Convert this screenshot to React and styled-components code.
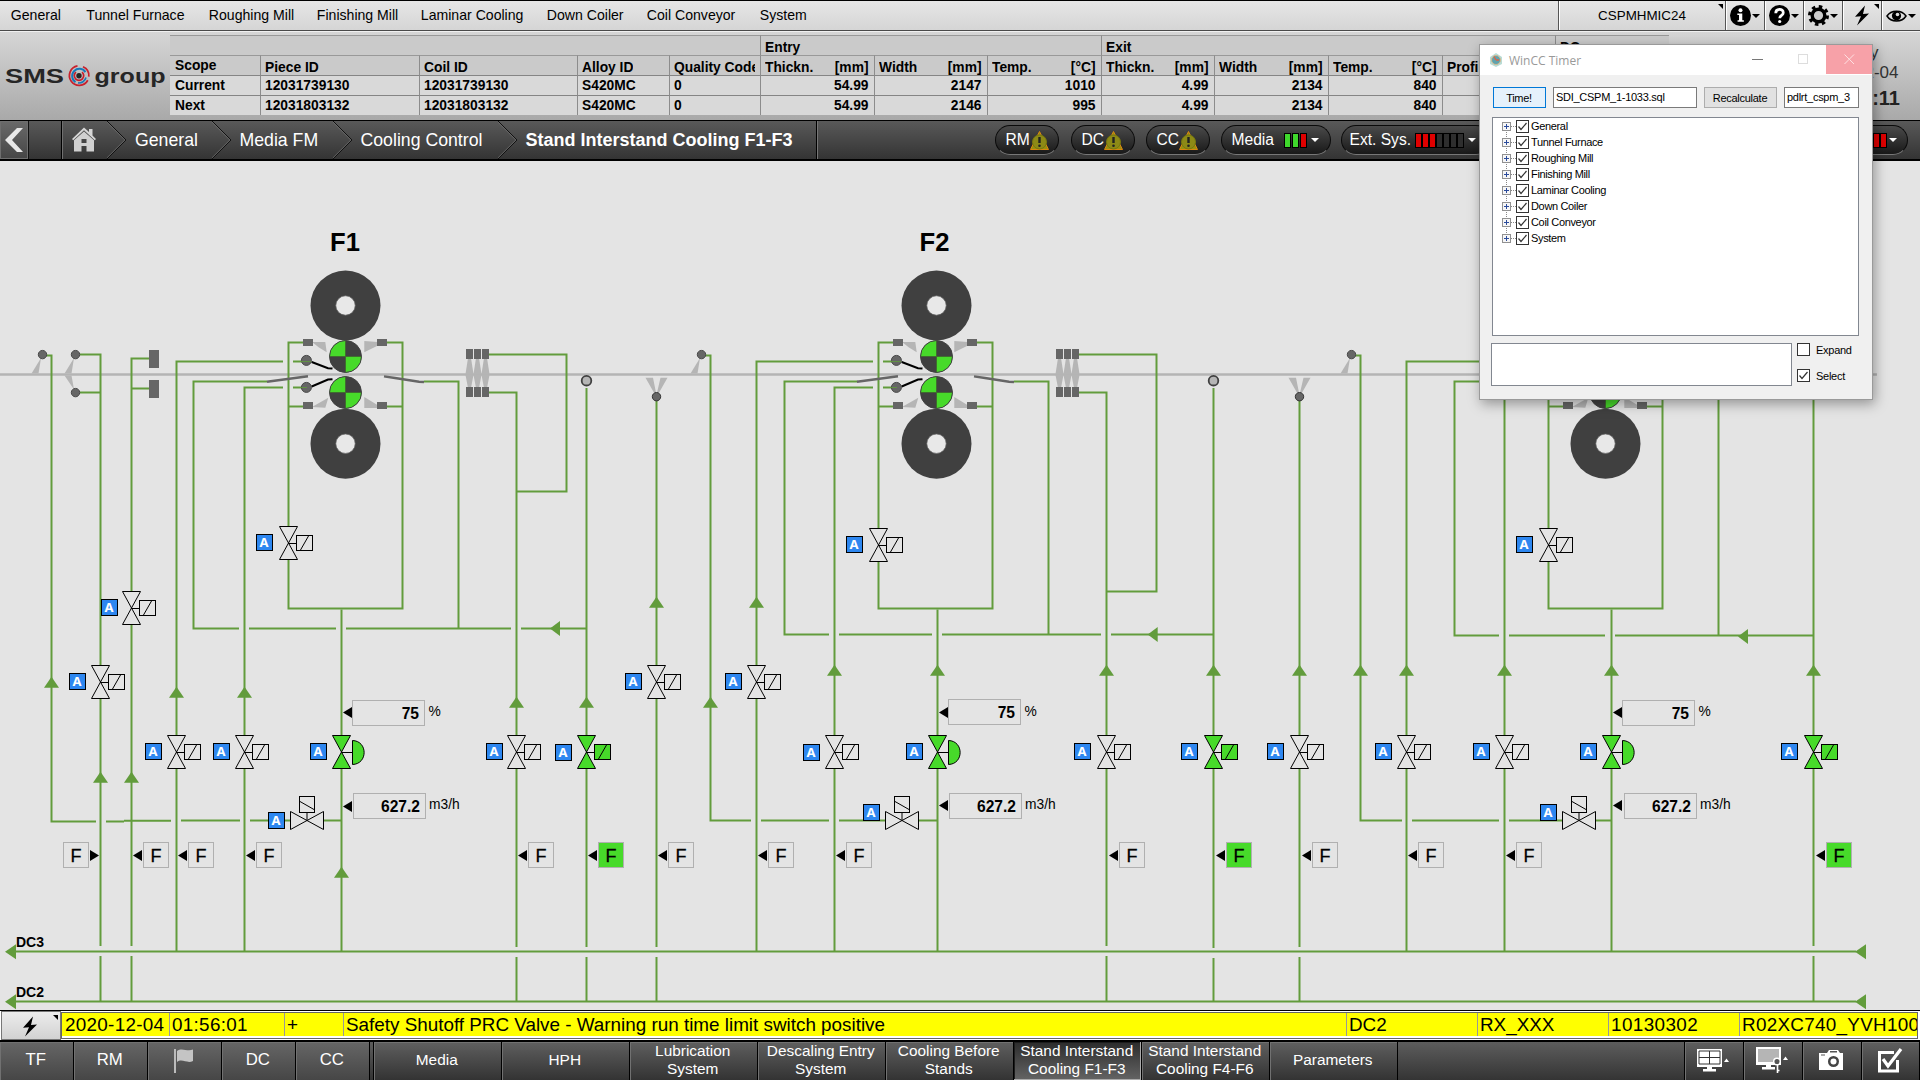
import React from "react";
import styled, { createGlobalStyle, css } from "styled-components";

const Global = createGlobalStyle`
  * { box-sizing: border-box; }
  html, body { margin: 0; padding: 0; background: #e4e4e4; overflow: hidden; }
  body { font-family: "Liberation Sans", Arial, sans-serif; color: #000; }
  svg { display: block; flex: none; }
`;

const Screen = styled.div`
  position: relative;
  width: 1920px;
  height: 1080px;
  display: flex;
  flex-direction: column;
  overflow: hidden;
  white-space: nowrap;
`;

/* ---------- menu bar ---------- */
const MenuBar = styled.header`
  height: 31px;
  display: flex;
  border-top: 1px solid #000;
  border-bottom: 1px solid #4a4a4a;
  background: linear-gradient(#e6e6e6, #d5d5d5);
  flex: none;
`;
const MenuItems = styled.nav`
  width: 1558px;
  display: flex;
  padding-left: 10.8px;
`;
const MenuItem = styled.span`
  width: ${(p) => p.$w}px;
  font-size: 14.1px;
  line-height: 28px;
`;
const MenuCell = styled.div`
  position: relative;
  width: ${(p) => p.$w}px;
  border-left: 1px solid #555;
  box-shadow: inset 1px 0 0 #fff;
  display: flex;
  align-items: center;
  justify-content: center;
  font-size: 13.4px;
`;
const Corner = styled.i`
  position: absolute;
  top: 3px;
  right: 2px;
  border-top: 5px solid #000;
  border-left: 5px solid transparent;
`;

/* ---------- piece information ---------- */
const InfoBar = styled.section`
  height: 89px;
  flex: none;
  display: flex;
  background: linear-gradient(#d6d6d6, #a9a9a9);
  border-top: 1px solid #f0f0f0;
`;
const LogoBox = styled.div`
  width: 170px;
  padding: 28px 0 0 0;
`;
const PieceTable = styled.div`
  width: 1499px;
  height: 80px;
  margin-top: 3px;
  display: grid;
  grid-template-columns: 90px 159px 158px 92px 91px 114px 113px 114px 113px 114px 114px 113px 114px;
  grid-template-rows: 20px 20px 20px 20px;
  border-bottom: 1px solid #808080;
`;
const Cell = styled.div`
  grid-column: span ${(p) => p.$span || 1};
  display: flex;
  justify-content: ${(p) => (p.$right ? "flex-end" : "space-between")};
  overflow: hidden;
  padding: ${(p) => (p.$first ? "0 5px" : p.$head ? "0 5.5px 0 4px" : "0 5.5px 0 4px")};
  border-top: 1px solid ${(p) => (p.$head ? "#999" : "#858585")};
  border-left: ${(p) => (p.$first ? "none" : "1px solid #8c8c8c")};
  background: ${(p) => (p.$head ? "#cacaca" : "#d9d9d9")};
  font-size: 13.8px;
  font-weight: bold;
  line-height: ${(p) => (p.$scope ? 20 : p.$head ? 23 : 19)}px;
  span { overflow: hidden; }
`;
const Clock = styled.div`
  flex: 1;
  display: flex;
  flex-direction: column;
  align-items: center;
  padding: 11px 0 0 121px;
  width: 251px;
  font-size: 17px;
  line-height: 20px;
  color: #333;
  div { width: 130px; text-align: center; }
  b { width: 90px; margin-top: 3px; text-align: right; font-size: 20px; line-height: 24px; color: #222; }
`;

/* ---------- breadcrumb ---------- */
const CrumbBar = styled.nav`
  height: 41px;
  flex: none;
  display: flex;
  color: #fff;
  background: linear-gradient(#595959, #343434);
  border-top: 1px solid #000;
  border-bottom: 2px solid #000;
`;
const BackButton = styled.div`
  width: 29px;
  border-right: 1px solid #111;
  box-shadow: inset 0 0 0 1px #6e6e6e;
  background: linear-gradient(#6a6a6a, #454545);
  padding: 6px 0 0 4px;
`;
const CrumbSpacer = styled.div`
  width: 33px;
  border-right: 1px solid #000;
`;
const Home = styled.div`
  width: 45px;
  padding: 6px 0 0 10px;
  box-shadow: inset 1px 0 0 #707070;
`;
const ChevronMark = styled.svg`
  width: 20px;
  height: 38px;
  margin-right: 8px;
`;
const Crumb = styled.span`
  width: ${(p) => p.$w}px;
  font-size: ${(p) => (p.$bold ? 18 : 17.7)}px;
  line-height: 39px;
  font-weight: ${(p) => (p.$bold ? "bold" : "normal")};
`;
const CrumbEnd = styled.div`
  width: 179px;
  border-left: 1px solid #000;
  box-shadow: inset 1px 0 0 #777;
`;
const Pill = styled.div`
  width: ${(p) => p.$w}px;
  height: 30px;
  margin: 4px ${(p) => p.$gap}px 0 0;
  padding-left: ${(p) => p.$pad || 10}px;
  display: flex;
  align-items: center;
  border: 1px solid #0a0a0a;
  border-bottom-color: #777;
  border-radius: 15px;
  background: linear-gradient(#4a4a4a, #191919);
  font-size: 15.6px;
`;
const Bars = styled.div`
  display: flex;
  gap: ${(p) => p.$gap || 0}px;
  margin-left: ${(p) => p.$ml || 0}px;
`;
const Bar = styled.i`
  width: 7px;
  height: 15px;
  background: ${(p) => p.$c};
  border: 1px solid #000;
`;
const Caret = styled.i`
  margin-left: ${(p) => p.$ml || 4}px;
  border: 4px solid transparent;
  border-top-color: ${(p) => p.$c || "#fff"};
  border-bottom: 0;
`;

/* ---------- process canvas ---------- */
const Canvas = styled.main`
  position: relative;
  height: 849px;
  flex: none;
  background: #e4e4e4;
  overflow: hidden;
`;
const Drawing = styled.svg`
  position: absolute;
  left: 0;
  top: 0;
`;
const Placed = styled.div`
  position: absolute;
  left: ${(p) => p.$x}px;
  top: ${(p) => p.$y - 161}px;
`;
const AutoBadge = styled(Placed)`
  width: 17px;
  height: 17px;
  border: 1px solid #000;
  background: #2e87f0;
  color: #fff;
  font: bold 13px/15px "Noto Sans", "Open Sans", sans-serif;
  text-align: center;
  text-indent: -1px;
`;
const FlagBox = styled(Placed)`
  width: 26px;
  height: 26px;
  border: 1px solid #b0b0b0;
  background: ${(p) => (p.$on ? "#47da2a" : "#e4e4e4")};
  font-size: 18px;
  -webkit-text-stroke: 0.3px #000;
  line-height: 26px;
  text-align: center;
`;
const ValueBox = styled(Placed)`
  width: 73px;
  height: 26px;
  border: 1px solid #b0b0b0;
  padding-right: 5px;
  font-size: 15.6px;
  font-weight: bold;
  line-height: 25px;
  text-align: right;
`;
const Label = styled(Placed)`
  font-size: ${(p) => p.$s || 13.8}px;
  font-weight: ${(p) => (p.$bold ? "bold" : "normal")};
  line-height: ${(p) => p.$s || 14}px;
`;

/* ---------- alarm line ---------- */
const AlarmBar = styled.section`
  height: 30px;
  flex: none;
  display: flex;
  border-top: 1px solid #000;
  background: #fff;
`;
const AlarmButton = styled.div`
  position: relative;
  width: 60px;
  border: 1px solid #777;
  margin-left: 1px;
  background: linear-gradient(#ececec, #d2d2d2);
  padding: 3px 0 0 17px;
`;
const AlarmRow = styled.div`
  width: 1857px;
  height: 27px;
  margin-top: 1px;
  display: flex;
  border: 1px solid #666;
  overflow: hidden;
`;
const AlarmCell = styled.div`
  width: ${(p) => p.$w}px;
  flex: none;
  height: 23px;
  overflow: hidden;
  padding-left: ${(p) => (p.$first ? 3 : 2.5)}px;
  border-left: ${(p) => (p.$first ? "none" : "1px solid #999")};
  background: #ff0;
  font-size: 18.85px;
  letter-spacing: ${(p) => p.$ls || 0}px;
  line-height: 23px;
`;

/* ---------- bottom navigation ---------- */
const BottomBar = styled.footer`
  height: 40px;
  flex: none;
  display: flex;
  color: #fff;
  border-top: 2px solid #000;
  background: linear-gradient(#5d5d5d, #343434);
`;
const NavButton = styled.div`
  width: ${(p) => p.$w}px;
  display: flex;
  align-items: center;
  justify-content: center;
  text-align: center;
  white-space: pre;
  border-right: 1px solid #000;
  box-shadow: inset 1px 1px 0 #717171;
  font-size: ${(p) => p.$s || 15.4}px;
  line-height: 18px;
  padding: 0 1.5px 2px 0;
  background: linear-gradient(#5f5f5f, #333);
  ${(p) => p.$light && css`background: linear-gradient(#666, #464646);`}
  ${(p) => p.$active && css`
    background: linear-gradient(#2c2c2c, #646464);
    box-shadow: inset -1px -1px 0 #aaa, inset 1px 1px 0 #1c1c1c;
  `}
`;
const Filler = styled.div`
  width: ${(p) => p.$w}px;
  border-right: 1px solid #000;
`;

/* ---------- timer dialog ---------- */
const Dialog = styled.div`
  position: absolute;
  left: 1479px;
  top: 44px;
  width: 394px;
  height: 356px;
  display: flex;
  flex-direction: column;
  background: #f0f0f0;
  border: 1px solid #9a9a9a;
  box-shadow: 2px 4px 12px rgba(0, 0, 0, 0.35);
  font-size: 11px;
  letter-spacing: -0.27px;
`;
const TitleBar = styled.div`
  height: 30px;
  flex: none;
  display: flex;
  align-items: center;
  padding-left: 9px;
  background: #fff;
  color: #999;
  font: 12px "Open Sans", "Noto Sans", sans-serif;
  letter-spacing: 0;
  span { width: 231px; padding-left: 6px; }
`;
const TitleButton = styled.div`
  width: ${(p) => p.$w}px;
  height: 29px;
  display: flex;
  align-items: center;
  justify-content: center;
  align-self: flex-start;
  background: ${(p) => (p.$red ? "#f7a1a8" : "transparent")};
`;
const FieldRow = styled.div`
  display: flex;
  margin: 12px 0 0 13px;
`;
const Field = styled.div`
  width: ${(p) => p.$w}px;
  height: 21px;
  margin-right: ${(p) => p.$gap || 0}px;
  padding-left: 2px;
  border: 1px solid #7a7a7a;
  background: #fff;
  line-height: 18px;
`;
const PushButton = styled(Field)`
  padding: 0 1px 0 0;
  border-color: ${(p) => (p.$primary ? "#0078d7" : "#adadad")};
  background: ${(p) => (p.$primary ? "#e5f1fb" : "#e1e1e1")};
  line-height: 20px;
  text-align: center;
`;
const Tree = styled.div`
  width: 367px;
  height: 219px;
  margin: 9px 0 0 12px;
  padding: 0 0 0 9px;
  border: 1px solid #828790;
  background: #fff;
`;
const TreeRow = styled.div`
  height: 16px;
  display: flex;
  align-items: center;
  font-size: 11px;
  letter-spacing: -0.34px;
`;
const CheckMark = styled.svg`
  width: 13px;
  height: 13px;
  margin-right: 2px;
`;
const DialogFoot = styled.div`
  display: flex;
  margin: 7px 0 0 11px;
`;
const MemoBox = styled.div`
  width: 301px;
  height: 43px;
  border: 1px solid #828790;
  background: #fff;
`;
const Options = styled.div`
  display: flex;
  flex-direction: column;
  gap: 13px;
  padding-left: 5px;
  div { display: flex; align-items: center; height: 13px; gap: 4px; }
`;

/* ---------- icons ---------- */
const G = "#629c3c";
const GREY = "#666";
const SPRAY = "#b5b5b5";

const Bolt = () => (
  <svg width="22" height="24" viewBox="0 0 22 24">
    <path d="M14 1.5 L4 12.8 L10 12.3 L6 21.5 L18 9.4 L12 10 Z" fill="#000" />
  </svg>
);

const Warning = () => (
  <svg width="19" height="19" viewBox="0 0 19 19">
    <path d="M9.5 0.5 L18.5 18.5 H0.5 Z" fill="#97910f" stroke="#d9860e" />
    <circle cx="9.5" cy="11" r="7" fill="#8d8a16" stroke="#77770f" />
    <path d="M9.5 6 v6" stroke="#222" strokeWidth="2.4" />
    <circle cx="9.5" cy="14.8" r="1.3" fill="#222" />
  </svg>
);

const Logo = () => (
  <svg width="170" height="40" viewBox="0 60 170 40" fontWeight="bold" fontSize="21" fill="#262626">
    <text x="5" y="82.7" textLength="59" lengthAdjust="spacingAndGlyphs">SMS</text>
    <text x="94.500" y="82.7" textLength="71" lengthAdjust="spacingAndGlyphs">group</text>
    <g fill="none" transform="translate(79 75.7)">
      <path d="M-1.5 -9.8 A9.8 9.8 0 1 0 8.8 4.6" stroke="#c8202c" strokeWidth="1.8" />
      <path d="M4 -9 A9.8 9.8 0 0 1 9.8 1" stroke="#c8202c" strokeWidth="1.8" />
      <path d="M6.4 -3.6 A7.2 7.2 0 1 0 -3.5 6.4" stroke="#1878b8" strokeWidth="2" />
      <path d="M7 1.8 A7.2 7.2 0 0 1 -1 7.2" stroke="#1878b8" strokeWidth="1.6" />
      <path d="M-3 -3.6 A4.7 4.7 0 1 0 3 -3.6" stroke="#c8202c" strokeWidth="1.7" />
      <circle r="2.7" fill="#262626" />
    </g>
  </svg>
);

const Check = ({ on }) => (
  <CheckMark viewBox="0 0 13 13">
    <rect x="0.5" y="0.5" width="12" height="12" fill="#fff" stroke="#333" />
    {on && <path d="M2.5 6.5 L5 9.5 L10.5 3" fill="none" stroke="#333" strokeWidth="1.2" />}
  </CheckMark>
);

const Expander = ({ last, first }) => (
  <svg width="14" height="16" viewBox="0 0 14 16">
    <path d={`M4.5 ${first ? 8 : 0} V${last ? 8 : 16} M9 8.5 H15`} stroke="#888" strokeDasharray="1 1" />
    <rect x="0.5" y="4.5" width="8" height="8" fill="#f6f6f6" stroke="#919191" />
    <path d="M2 8.5 h5 M4.5 6 v5" stroke="#2b4b9b" />
  </svg>
);

const Chevron = () => (
  <ChevronMark viewBox="0 0 20 38">
    <path d="M0 0 L19 19 L0 38" fill="none" stroke="#111" />
    <path d="M-1.2 0 L17.8 19 L-1.2 38" fill="none" stroke="#777" strokeWidth=".7" />
  </ChevronMark>
);

/* ---------- diagram parts ---------- */
const up = (x, y) => <path key={`u${x}`} d={`M${x} ${y} l7.5 11 h-15 z`} fill={G} />;
const left = (x, y, w = 10) => <path d={`M${x} ${y} l${w} -7.5 v15 z`} fill={G} />;

const Valve = ({ x, y, on, dome }) => {
  const f = on ? "#47da2a" : "none";
  return (
    <g transform={`translate(${x} ${y})`} fill={f} stroke="#000" strokeWidth="1">
      <rect x="-2" y="-16" width="4" height="32" fill="#e4e4e4" stroke="none" />
      <path d="M-9 -16.5 H9 L-9 16.5 H9 Z" />
      <path d={dome ? "M0 .5 H11" : "M0 .5 H8"} />
      {dome ? (
        <path d="M11 -11.5 C26.500 -11 26.500 12 11 12.5 Z" />
      ) : (
        <>
          <rect x="8" y="-7.5" width="16" height="15" />
          <path d="M12 7 L20 -7" />
        </>
      )}
    </g>
  );
};

const SideValve = ({ x }) => (
  <g transform={`translate(${x} 820.5)`} fill="none" stroke="#000">
    <rect x="-17" y="-2" width="34" height="4" fill="#e4e4e4" stroke="none" />
    <path d="M-16.5 -9 V9 L16.5 -9 V9 Z M0 0 V-8" />
    <rect x="-7.5" y="-24" width="15" height="16" />
    <path d="M-7 -19 L7 -11" />
  </g>
);

const Roll = ({ x, y }) => (
  <g>
    <circle cx={x} cy={y} r="35" fill="#404040" />
    <circle cx={x} cy={y} r="9.7" fill="#e8e8e8" stroke="#666" strokeWidth=".7" />
  </g>
);
const WorkRoll = ({ x, y }) => (
  <g transform={`translate(${x} ${y})`}>
    <circle r="16" fill="#404040" />
    <path d="M0 0 V-16 A16 16 0 0 0 -16 0 Z M0 0 V16 A16 16 0 0 0 16 0 Z" fill="#47da2a" />
    <path d="M-16 0 H16 M0 -16 V16" stroke="#3f6d2e" strokeWidth="1" />
    <circle r="16" fill="none" stroke="#404040" />
  </g>
);

const Stand = ({ dx, roll, bottom }) => (
  <g>
    <g transform={`translate(${dx} 0)`}>
      <g stroke={G} strokeWidth="2" fill="none">
        <path d="M304 342.5 H288.5 V608.5 H402.5 V342.5 H386 M288.5 406.5 H304 M386 406.5 H402.5" />
        <path d={`M424 381.5 H458.5 V${bottom} M293 361.5 H311 M293 387.5 H308`} />
      </g>
      <g fill={SPRAY}>
        <path d="M312 342 H325.3 L326.7 352.3 L319 347.5 Z M364.3 341 V352.3 L378 345.5 V342 Z" />
        <path d="M328.3 397.7 L325.3 407.7 L312 407 L319 403 Z M364.3 397 V408 H377 V404.7 Z" />
      </g>
      <g fill={GREY}>
        <rect x="303" y="339" width="10" height="7" /><rect x="377" y="339" width="10" height="7" />
        <rect x="303" y="402" width="10" height="7" /><rect x="377" y="402" width="10" height="7" />
        <circle cx="306.4" cy="360.4" r="5" stroke="#484848" />
        <circle cx="306.4" cy="387.4" r="5" stroke="#484848" />
      </g>
      <path d="M301 361.5 H311 M301 387.5 H307" stroke={G} strokeWidth="1.2" opacity=".8" />
      <path d="M311.7 362 L328 368.2 L332.5 368.6 M311.7 386.5 L328 379.6 L332.5 379.2" stroke="#000" strokeWidth="2" fill="none" />
      <path d="M267 381.7 L295 378 L308 376.200 M384 376.4 L395 378 L419 381.700 L424 382" stroke={GREY} strokeWidth="2.4" fill="none" />
    </g>
    <Roll x={roll} y="305.5" /><Roll x={roll} y="443.7" />
    <WorkRoll x={roll} y="356.5" /><WorkRoll x={roll} y="392.5" />
  </g>
);

const SprayBank = ({ dx }) => (
  <g transform={`translate(${dx} 0)`}>
    {[466, 474, 482].map((x) => (
      <g key={x}>
        <path d={`M${x + 2} 358 h3 l2.5 16 h-8 z M${x + 2} 388 h3 l2.5 -13 h-8 z`} fill={SPRAY} />
        <rect x={x} y="349" width="7" height="10" fill={GREY} />
        <rect x={x} y="387" width="7" height="10" fill={GREY} />
      </g>
    ))}
  </g>
);

const Wiper = ({ x }) => (
  <g>
    <path d={`M${x - 1.5} 358 L${x - 11} 373.5 h7 z`} fill={SPRAY} />
    <circle cx={x} cy="354.6" r="4.2" fill={GREY} stroke="#484848" />
  </g>
);
const BottomSpray = ({ x }) => (
  <g>
    <path d={`M${x - 11} 377.7 h7.5 l3 15 h-2 z M${x + 11} 377.7 h-7 l-3.5 15 h2 z`} fill={SPRAY} />
    <circle cx={x} cy="396.7" r="4.2" fill={GREY} stroke="#333" />
  </g>
);
const Eye = ({ x }) => <circle cx={x} cy="380.7" r="4.8" fill="#b5b5b5" stroke="#404040" strokeWidth="1.8" />;

const pipes = [
  "M45 355.5 H51.5 V821.5 H96", "M106 821.5 H124 M124 820.8 H171", "M181 820.5 H240 M250 820.5 H341.5",
  "M80 354.5 H100.5 V946 M100.5 956 V1001.5 M80 392.5 H100.5",
  "M149 358.5 H131.5 V946 M131.5 956 V1001.5 M131.5 388.5 H149",
  "M283 361.5 H176.5 V951.5",
  "M267 381.5 H193.5 V628.5 H239 M249 628.5 H336 M346 628.5 H511 M521 628.5 H586.5",
  "M283 387.5 H244.5 V951.5", "M341.5 609.5 V951.5",
  "M489 354.5 H566.5 V491.5 H516.5 M489 392.5 H516.5 V947 M516.5 957 V1001.5",
  "M586.5 388 V947 M586.5 957 V1001.5",
  "M656.5 400 V947 M656.5 957 V1001.5",
  "M704 355.5 H710.5 V820.5 H751 M761 820.5 H829 M839 820.5 H937.5",
  "M873 361.5 H756.5 V951.5",
  "M857.5 381.5 H784.5 V634.5 H829 M839 634.5 H932 M942 634.5 H1101 M1111 634.5 H1213.5",
  "M873 387.5 H834.5 V951.5", "M937.5 609.5 V951.5",
  "M1079 354.5 H1156.5 V591.5 H1106.5 M1079 392.5 H1106.5 V946 M1106.5 956 V1001.5",
  "M1213.5 388 V948 M1213.5 958 V1001.5",
  "M1299.5 400 V947 M1299.5 957 V1001.5",
  "M1354 355.5 H1360.5 V820.5 H1402 M1412 820.5 H1499 M1509 820.5 H1611.5",
  "M1543 361.5 H1406.5 V951.5",
  "M1527 381.5 H1454.5 V635.5 H1499 M1509 635.5 H1605 M1615 635.5 H1813.5",
  "M1543 387.5 H1504.5 V951.5", "M1611.5 609.5 V951.5",
  "M1813.5 388 V946 M1813.5 956 V1001.5",
  "M14 951.5 H1856", "M14 1001.5 H1856",
];
const ups = [
  [51.5, 676.7], [100.5, 771.7], [131.5, 771.7], [176.5, 686.7], [244.5, 686.7], [341.5, 866.7],
  [516.5, 696.7], [586.5, 696.7], [656.5, 596.7], [710.5, 696.7], [756.5, 596.7], [834.5, 664.7],
  [937.5, 664.7], [1106.5, 664.7], [1213.5, 664.7], [1299.5, 664.7], [1360.5, 664.7], [1406.5, 664.7],
  [1504.5, 664.7], [1611.5, 664.7], [1813.5, 664.7],
];
/* centre x, centre y, badge x, badge y, state */
const valves = [
  [288.5, 543, 256, 534], [131.5, 608, 101, 599], [100.5, 682, 69, 673], [176.5, 752, 145, 743],
  [244.5, 752, 213, 743], [341.5, 752, 310, 743, "dome"], [516.5, 752, 486, 743], [586.5, 752, 555, 744, "on"],
  [656.5, 682, 625, 673], [756.5, 682, 725, 673], [834.5, 752, 803, 744], [937.5, 752, 906, 743, "dome"],
  [1106.5, 752, 1074, 743], [1213.5, 752, 1181, 743, "on"], [1299.5, 752, 1267, 743], [1406.5, 752, 1375, 743],
  [1504.5, 752, 1473, 743], [1611.5, 752, 1580, 743, "dome"], [1813.5, 752, 1781, 743, "on"],
  [878.5, 545, 846, 536], [1548.5, 545, 1516, 536],
];
const sideBadges = [[268, 812], [863, 804], [1540, 804]];
/* box x, lit, arrow on the right-hand side */
const flags = [
  [63, 0, 1], [143], [188], [256], [528], [598, 1], [668], [768],
  [846], [1119], [1226, 1], [1312], [1418], [1516], [1826, 1],
];
const values = [
  { x: 352, y: 700, v: "75", u: "%", ax: 343, ay: 712.5, ux: 428.5 },
  { x: 353, y: 793, v: "627.2", u: "m3/h", ax: 343, ay: 806.5, ux: 429 },
  { x: 948, y: 699, v: "75", u: "%", ax: 939, ay: 712.5, ux: 1024.5 },
  { x: 949, y: 793, v: "627.2", u: "m3/h", ax: 939, ay: 805.5, ux: 1025 },
  { x: 1622, y: 700, v: "75", u: "%", ax: 1613, ay: 712.5, ux: 1698.5 },
  { x: 1624, y: 793, v: "627.2", u: "m3/h", ax: 1613, ay: 805.5, ux: 1700 },
];

const Process = () => (
  <Canvas>
    <Drawing width="1920" height="849" viewBox="0 161 1920 849">
      <path d="M0 374.5 H1877" stroke="#b4b4b4" strokeWidth="2.4" />
      <g stroke={G} strokeWidth="2" fill="none">{pipes.map((d) => <path key={d} d={d} />)}</g>
      {ups.map(([x, y]) => up(x, y))}
      {left(550, 628.5)}{left(1147.7, 634.5)}{left(1738, 636.5)}
      {left(5, 951.8, 11)}{left(5, 1001.8, 11)}{left(1855, 951.8, 11)}{left(1855, 1001.8, 11)}
      <Stand dx={0} roll={345.5} bottom={628.5} />
      <Stand dx={590} roll={936.5} bottom={634.5} />
      <Stand dx={1260} roll={1605.5} bottom={635.5} />
      <SprayBank dx={0} /><SprayBank dx={590} />
      <Wiper x={42.5} /><Wiper x={701.5} /><Wiper x={1351.5} />
      <path d="M74 358 L64.5 373.5 h7 z M74 389.5 L64.5 375.5 h7 z" fill={SPRAY} />
      <circle cx="75.5" cy="354.6" r="4.2" fill={GREY} stroke="#484848" />
      <circle cx="75.5" cy="392.6" r="4.2" fill={GREY} stroke="#484848" />
      <rect x="149" y="350" width="10" height="18" fill={GREY} />
      <rect x="149" y="380" width="10" height="18" fill={GREY} />
      <BottomSpray x={656.5} /><BottomSpray x={1299.5} />
      <Eye x={586.5} /><Eye x={1213.5} />
      {valves.map(([x, y, , , s]) => <Valve key={`${x}-${y}`} x={x} y={y} on={!!s} dome={s === "dome"} />)}
      <SideValve x={307} /><SideValve x={902} /><SideValve x={1579} />
      {flags.map(([x, , rev]) => (
        <path key={x} d={rev ? `M${x + 27} 850 l9 5.5 l-9 5.5 z` : `M${x - 10} 855.5 l9 -5.5 v11 z`} />
      ))}
      {values.map((v) => <path key={`${v.x}${v.y}`} d={`M${v.ax} ${v.ay} l9 -5.5 v11 z`} />)}
    </Drawing>
    {valves.map(([, , x, y]) => <AutoBadge key={`${x}-${y}`} $x={x} $y={y}>A</AutoBadge>)}
    {sideBadges.map(([x, y]) => <AutoBadge key={x} $x={x} $y={y}>A</AutoBadge>)}
    {flags.map(([x, on]) => <FlagBox key={x} $x={x} $y={842} $on={on}>F</FlagBox>)}
    {values.map((v) => (
      <React.Fragment key={`${v.x}-${v.y}`}>
        <ValueBox $x={v.x} $y={v.y}>{v.v}</ValueBox>
        <Label $x={v.ux} $y={v.y < 750 ? 705 : 798}>{v.u}</Label>
      </React.Fragment>
    ))}
    <Label $x={330} $y={230} $s={25.6} $bold>F1</Label>
    <Label $x={919.5} $y={230} $s={25.6} $bold>F2</Label>
    <Label $x={16} $y={935} $s={14} $bold>DC3</Label>
    <Label $x={16} $y={985} $s={14} $bold>DC2</Label>
  </Canvas>
);

/* ---------- page data ---------- */
const menu = [
  ["General", 75.5], ["Tunnel Furnace", 122.5], ["Roughing Mill", 108], ["Finishing Mill", 104],
  ["Laminar Cooling", 126], ["Down Coiler", 100], ["Coil Conveyor", 113], ["System", 60],
];
const heads = [
  ["Piece ID"], ["Coil ID"], ["Alloy ID"], ["Quality Code"], ["Thickn.", "[mm]"], ["Width", "[mm]"],
  ["Temp.", "[°C]"], ["Thickn.", "[mm]"], ["Width", "[mm]"], ["Temp.", "[°C]"], ["Profile"], [""],
];
const rows = [
  ["Current", "12031739130", "12031739130", "S420MC", "0", "54.99", "2147", "1010", "4.99", "2134", "840", "", ""],
  ["Next", "12031803132", "12031803132", "S420MC", "0", "54.99", "2146", "995", "4.99", "2134", "840", "", ""],
];
const tree = ["General", "Tunnel Furnace", "Roughing Mill", "Finishing Mill", "Laminar Cooling", "Down Coiler", "Coil Conveyor", "System"];
const alarm = [
  ["2020-12-04", 106.5, 0.3], ["01:56:01", 115, 0.3], ["+", 59],
  ["Safety Shutoff PRC Valve - Warning run time limit switch positive", 1003],
  ["DC2", 131], ["RX_XXX", 131], ["10130302", 131, 0.4], ["R02XC740_YVH100", 180, 0.3],
];
const areas = [
  ["Media"], ["HPH"], ["Lubrication\nSystem"], ["Descaling Entry\nSystem"], ["Cooling Before\nStands"],
  ["Stand Interstand\nCooling F1-F3", 1], ["Stand Interstand\nCooling F4-F6"], ["Parameters"],
];

const RED = "#e00000";
const GREEN = "#3fd82c";
const OFF = "#2e2e2e";

export default function App() {
  return (
    <Screen>
      <Global />
      <MenuBar>
        <MenuItems>{menu.map(([t, w]) => <MenuItem key={t} $w={w}>{t}</MenuItem>)}</MenuItems>
        <MenuCell $w={167}>CSPMHMIC24<Corner /></MenuCell>
        <MenuCell $w={39}>
          <svg width="21" height="21" viewBox="0 0 20 20"><circle cx="10" cy="10" r="10" /><circle cx="10" cy="5" r="1.9" fill="#fff" /><path d="M7 8 h4.7 v6.5 h1.5 v1.5 h-6 v-1.5 h1.4 v-5 H7 z" fill="#fff" /></svg>
          <Caret $c="#000" $ml={1} />
        </MenuCell>
        <MenuCell $w={39}>
          <svg width="21" height="21" viewBox="0 0 20 20"><circle cx="10" cy="10" r="10" /><path d="M6.4 7.8 C6.4 3 13.6 3 13.6 7.4 C13.6 10 10.2 9.8 10.2 12.6" fill="none" stroke="#fff" strokeWidth="2.6" /><circle cx="10.2" cy="15.7" r="1.5" fill="#fff" /></svg>
          <Caret $c="#000" $ml={1} />
        </MenuCell>
        <MenuCell $w={39}>
          <svg width="21" height="21" viewBox="0 0 21 21"><circle cx="10.5" cy="10.5" r="9" fill="none" stroke="#000" strokeWidth="3" strokeDasharray="3.5 3.57" /><circle cx="10.5" cy="10.5" r="6.3" fill="#ccc" stroke="#000" strokeWidth="3.4" /></svg>
          <Caret $c="#000" $ml={1} />
        </MenuCell>
        <MenuCell $w={39}><Bolt /><Corner /></MenuCell>
        <MenuCell $w={39}>
          <svg width="21" height="16" viewBox="0 0 21 16"><path d="M1 8 C5 1.5 16 1.5 20 8 C16 14.5 5 14.5 1 8 Z" fill="none" stroke="#000" strokeWidth="1.5" /><circle cx="10.5" cy="7.8" r="4.6" /><circle cx="11.5" cy="6.5" r="1.8" fill="#ddd" /></svg>
          <Caret $c="#000" $ml={1} />
        </MenuCell>
      </MenuBar>

      <InfoBar>
        <LogoBox><Logo /></LogoBox>
        <PieceTable>
          <Cell $head $first $span={5} />
          <Cell $head $span={3}>Entry</Cell>
          <Cell $head $span={4}>Exit</Cell>
          <Cell $head>DC</Cell>
          <Cell $head $first $scope>Scope</Cell>
          {heads.map(([a, b], i) => <Cell key={i} $head><span>{a}</span>{b && <span>{b}</span>}</Cell>)}
          {rows.map((r) => r.map((v, i) => <Cell key={r[0] + i} $first={i === 0} $right={i > 4}>{v}</Cell>))}
        </PieceTable>
        <Clock><div>Friday</div><div>2020-12-04</div><b>01:56:11</b></Clock>
      </InfoBar>

      <CrumbBar>
        <BackButton>
          <svg width="22" height="26" viewBox="0 0 22 26"><path d="M13 1 H19 L8 13 L19 25 H13 L1 13 Z" fill="#e8e8e8" /></svg>
        </BackButton>
        <CrumbSpacer />
        <Home>
          <svg width="24" height="25" viewBox="0 0 24 25"><path d="M0 12 L12 0.5 L17 5 V2 h3.5 v6.5 L24 12 l-1.2 1.2 L12 3.2 L1.2 13.2 Z" fill="#d6d6d6" /><path d="M2 13.3 L12 4.5 L22 13.3 V24.5 H14.5 V19 H9.5 V24.5 H2 Z M9.5 12 V16 H14.5 V12 Z" fillRule="evenodd" fill="#d0d0d0" /></svg>
        </Home>
        <Chevron /><Crumb $w={76.5}>General</Crumb>
        <Chevron /><Crumb $w={93}>Media FM</Crumb>
        <Chevron /><Crumb $w={137}>Cooling Control</Crumb>
        <Chevron /><Crumb $w={290} $bold>Stand Interstand Cooling F1-F3</Crumb>
        <CrumbEnd />
        <Pill $w={64} $gap={12}>RM<Warning /></Pill>
        <Pill $w={64} $gap={11}>DC<Warning /></Pill>
        <Pill $w={64} $gap={11}>CC<Warning /></Pill>
        <Pill $w={110} $gap={10}>
          Media
          <Bars $ml={10} $gap={1}><Bar $c={GREEN} /><Bar $c={GREEN} /><Bar $c={RED} /></Bars>
          <Caret />
        </Pill>
        <Pill $w={150} $gap={317} $pad={8}>
          Ext. Sys.
          <Bars $ml={4}>{[1, 1, 1, 0, 0, 0, 0].map((r, i) => <Bar key={i} $c={r ? RED : OFF} />)}</Bars>
          <Caret />
        </Pill>
        <Pill $w={100} $gap={0} $pad={50}>
          <Bars>{[1, 1, 1, 1].map((r, i) => <Bar key={i} $c={RED} />)}</Bars>
          <Caret $ml={2} />
        </Pill>
      </CrumbBar>

      <Process />

      <AlarmBar>
        <AlarmButton><Bolt /><Corner /></AlarmButton>
        <AlarmRow>{alarm.map(([t, w, ls], i) => <AlarmCell key={t} $w={w} $ls={ls} $first={i === 0}>{t}</AlarmCell>)}</AlarmRow>
      </AlarmBar>

      <BottomBar>
        <NavButton $w={74} $s={16.8} $light>TF</NavButton>
        <NavButton $w={74} $s={16.8} $light>RM</NavButton>
        <NavButton $w={74} $light>
          <svg width="20" height="25" viewBox="0 0 20 25"><path d="M1 1 V25" stroke="#bbb" strokeWidth="2" /><path d="M3 3 C8 -1 13 4 19 1.5 V13 C13 16 8 10 3 14 Z" fill="#c4c4c4" /></svg>
        </NavButton>
        <NavButton $w={74} $s={16.8} $light>DC</NavButton>
        <NavButton $w={74} $s={16.8} $light>CC</NavButton>
        <Filler $w={4} />
        {areas.map(([t, a]) => <NavButton key={t} $w={128} $active={a}>{t}</NavButton>)}
        <Filler $w={287} />
        <NavButton $w={59}>
          <svg width="34" height="24" viewBox="0 0 34 24"><rect x="1" y="1" width="25" height="18" fill="#fff" /><path d="M3 3 h21 v13 h-21 z M3 9.5 h21 M13.5 3 v13" fill="none" stroke="#333" /><path d="M11 19 h5 v2 h4 v2.5 h-13 v-2.500 h4 z" fill="#fff" /><path d="M28 14 l2.500 -3.500 l2.500 3.500 z" fill="#fff" /></svg>
        </NavButton>
        <NavButton $w={59}>
          <svg width="34" height="26" viewBox="0 1 34 26"><rect x="1" y="1" width="25" height="18" fill="#fff" /><rect x="3" y="3" width="21" height="13" fill="#b5b5b5" /><path d="M11 19 h5 v2 h4 v2.500 h-13 v-2.500 h4 z" fill="#fff" /><circle cx="22" cy="15.500" r="3.300" fill="#555" stroke="#fff" strokeWidth="1.500" /><path d="M22.500 19 V27 M22.500 24.500 h2" stroke="#fff" strokeWidth="1.600" /><path d="M28 14 l2.500 -3.500 l2.500 3.500 z" fill="#fff" /></svg>
        </NavButton>
        <NavButton $w={59}>
          <svg width="26" height="22" viewBox="0 0 26 22"><path d="M1 4 H9 L11 1 H20 L22 4 H25 V21 H1 Z" fill="#fff" /><rect x="12" y="2" width="7" height="1.500" fill="#555" /><circle cx="15.500" cy="12.500" r="5.500" fill="#444" /><circle cx="15.500" cy="12.500" r="3" fill="#fff" /><path d="M3 6 h4" stroke="#555" /></svg>
        </NavButton>
        <NavButton $w={58}>
          <svg width="26" height="26" viewBox="0 0 26 26"><path d="M17 5.500 H2.500 V24 H20.500 V13" fill="none" stroke="#fff" strokeWidth="3" /><path d="M6 12 L11 19 L24 2" fill="none" stroke="#fff" strokeWidth="3.200" /></svg>
        </NavButton>
      </BottomBar>

      <Dialog>
        <TitleBar>
          <svg width="14" height="14" viewBox="0 0 14 14"><path d="M7 0 L13 4 L13 11 L7 14 L1 11 L1 4 Z" fill="#b9dcd6" /><circle cx="7" cy="7" r="4.500" fill="#5fa3ae" stroke="#d9b98c" /><path d="M7 7 L5 3.500 M7 7 h3" stroke="#d9664a" strokeWidth="1.500" /></svg>
          <span>WinCC Timer</span>
          <TitleButton $w={46}><svg width="11" height="11"><path d="M0 5.500 H11" stroke="#777" /></svg></TitleButton>
          <TitleButton $w={46}><svg width="11" height="11"><rect x=".5" y=".5" width="9" height="9" fill="none" stroke="#ddd" /></svg></TitleButton>
          <TitleButton $w={46} $red><svg width="11" height="11"><path d="M.5 .5 L10 10 M10 .5 L.5 10" stroke="#fde0e2" /></svg></TitleButton>
        </TitleBar>
        <FieldRow>
          <PushButton $w={53} $gap={7} $primary>Time!</PushButton>
          <Field $w={144} $gap={7}>SDI_CSPM_1-1033.sql</Field>
          <PushButton $w={73} $gap={7}>Recalculate</PushButton>
          <Field $w={75}>pdlrt_cspm_3</Field>
        </FieldRow>
        <Tree>
          {tree.map((t, i) => (
            <TreeRow key={t}><Expander first={i === 0} last={i === tree.length - 1} /><Check on />{t}</TreeRow>
          ))}
        </Tree>
        <DialogFoot>
          <MemoBox />
          <Options><div><Check />Expand</div><div><Check on />Select</div></Options>
        </DialogFoot>
      </Dialog>
    </Screen>
  );
}
